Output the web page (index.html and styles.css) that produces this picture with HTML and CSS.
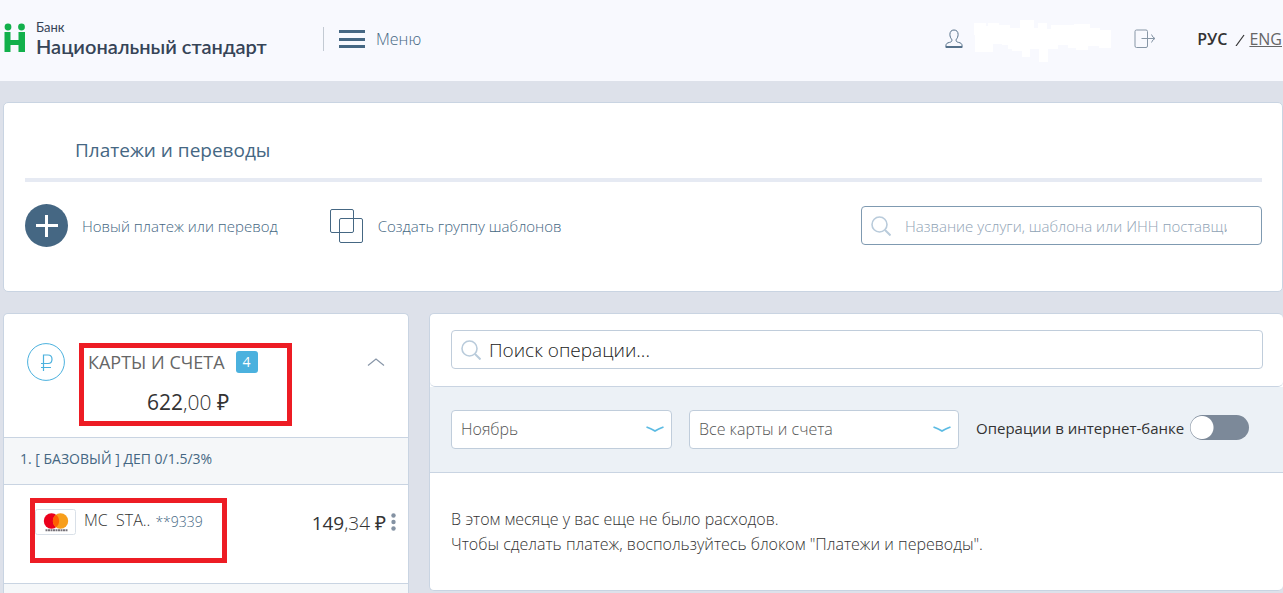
FILE: index.html
```
<!DOCTYPE html>
<html lang="ru">
<head>
    <meta charset="UTF-8">
    <meta name="viewport" content="width=device-width, initial-scale=1.0">
    <title>Банк Национальный стандарт</title>
    <link rel="stylesheet" href="styles.css">
</head>
<body>
    <header class="header">
        <a class="logo" href="#">
            <svg width="22" height="30" viewBox="0 0 22 30" fill="#12b04b">
                <circle cx="4" cy="4" r="3.4"/>
                <circle cx="17.500" cy="4" r="3.400"/>
                <path d="M0.500 9H6.500V17H14.500V9H21V29H14.500V22H6.500V29H0.500Z"/>
            </svg>
            <span class="logo-text">
                <span class="logo-small">Банк</span>
                <span class="logo-name">Национальный стандарт</span>
            </span>
        </a>
        <button type="button" class="menu-button">
            <span class="burger"></span>
            Меню
        </button>
        <div class="user">
            <svg width="18" height="20" viewBox="0 0 18 20" fill="none" stroke="#56718a">
                <path d="M9 1C6.400 1 4.900 2.800 4.900 5.300C4.900 7.600 5.700 9.200 6.700 10.200C7.300 12.200 6.500 12.900 4.500 13.400C2 14 1 14.500 0.900 17V18.500H17.100V17C17 14.500 16 14 13.500 13.400C11.500 12.900 10.700 12.200 11.300 10.200C12.300 9.200 13.100 7.600 13.100 5.300C13.100 2.800 11.600 1 9 1Z"/>
                <path d="M1 17.500H17"/>
            </svg>
            <svg class="user-name" width="138" height="44" viewBox="0 0 138 44" fill="#fff">
                <path d="M0 4H12V7H14V4H25V6H36V9H46V1H60V9H64V4H73V10H77V6H100V5H116V9H126V11H137V29H125V27H114V31H102V29H94V26H84V30H74V43H65V30H56V38H48V32H38V30H34V26H28V25H19V33H1V16H0Z"/>
            </svg>
        </div>
        <a class="logout" href="#" aria-label="Выход">
            <svg width="22" height="20" viewBox="0 0 22 20" fill="none" stroke="#8796a6">
                <rect x="1" y="1" width="12.500" height="17.500" rx="1.500"/>
                <path d="M7.500 9.500H21M17.500 5.500Q18.500 8.500 21 9.500Q18.500 10.500 17.500 13.500"/>
            </svg>
        </a>
        <div class="langs">
            <span class="lang-active">РУС</span>
            <svg width="10" height="14" viewBox="0 0 10 14" stroke="#333" stroke-width="1.200">
                <path d="M1 14L9 3"/>
            </svg>
            <a href="#">ENG</a>
        </div>
    </header>

    <main class="content">
        <section class="panel payments">
            <h2>Платежи и переводы</h2>
            <div class="payments-row">
                <a class="action action-new" href="#">
                    <svg width="43" height="43" viewBox="0 0 43 43">
                        <circle cx="21.500" cy="21.500" r="21.500" fill="#456783"/>
                        <path d="M11 21.500H33M21.500 11V33" stroke="#fff" stroke-width="3"/>
                    </svg>
                    Новый платеж или перевод
                </a>
                <a class="action" href="#">
                    <svg width="34" height="35" viewBox="0 0 34 35" fill="none" stroke="#456783">
                        <rect x="0.500" y="1.500" width="23" height="23" rx="1.500"/>
                        <rect x="9.500" y="10.500" width="23" height="24" rx="1.500"/>
                    </svg>
                    Создать группу шаблонов
                </a>
                <label class="search search-service">
                    <svg width="20" height="20" viewBox="0 0 20 20" fill="none" stroke="#b9cbdb" stroke-width="1.600">
                        <circle cx="8.500" cy="8.500" r="7.500"/>
                        <path d="M14 14L19.500 19.500" stroke-width="2"/>
                    </svg>
                    <input type="text" placeholder="Название услуги, шаблона или ИНН поставщика" aria-label="Поиск услуги">
                </label>
            </div>
        </section>

        <div class="columns">
            <aside class="panel accounts">
                <div class="accounts-head">
                    <svg width="38" height="38" viewBox="0 0 38 38" fill="none" stroke="#4bb1de">
                        <circle cx="19" cy="19" r="18.400"/>
                        <path d="M16.500 28V12H21Q25 12 25 16.200Q25 20.500 21 20.500H14M14 24.500H24" stroke-width="1.200"/>
                    </svg>
                    <div class="accounts-summary">
                        <div class="accounts-title">КАРТЫ И СЧЕТА <span class="count">4</span></div>
                        <div class="accounts-total"><b>622</b>,00 <b>₽</b></div>
                    </div>
                    <button type="button" class="collapse" aria-label="Свернуть">
                        <svg width="18" height="8" viewBox="0 0 18 8" fill="none" stroke="#8896a8" stroke-width="1.200">
                            <path d="M1 7.500L9 1L17 7.500"/>
                        </svg>
                    </button>
                </div>
                <div class="group">1. [ БАЗОВЫЙ ] ДЕП 0/1.5/3%</div>
                <div class="card-row">
                    <div class="card-info">
                        <svg width="41" height="26" viewBox="0 0 41 26">
                            <rect x="0.500" y="0.500" width="40" height="25" rx="2" fill="#fff" stroke="#d9e0e8"/>
                            <circle cx="16.500" cy="12" r="7.700" fill="#eb001b"/>
                            <circle cx="25.500" cy="12" r="7.700" fill="#f79e1b"/>
                            <path d="M21 5.800A7.700 7.700 0 0 1 21 18.200A7.700 7.700 0 0 1 21 5.800Z" fill="#ff5f00"/>
                            <path d="M10.500 21.300H32.500" stroke="#77737a" stroke-width="2" stroke-dasharray="2 0.500"/>
                        </svg>
                        <span class="card-name">MC&nbsp; STA..</span>
                        <span class="card-number">**9339</span>
                    </div>
                    <div class="card-sum"><b>149</b>,34 <b>₽</b></div>
                    <button type="button" class="dots" aria-label="Действия">
                        <svg width="5" height="18" viewBox="0 0 5 18" fill="#8492a3">
                            <circle cx="2.500" cy="2.500" r="2.200"/>
                            <circle cx="2.500" cy="9" r="2.200"/>
                            <circle cx="2.500" cy="15.500" r="2.200"/>
                        </svg>
                    </button>
                </div>
                <div class="group group-rest"></div>
            </aside>

            <section class="panel operations">
                <div class="operations-search">
                    <label class="search">
                        <svg width="20" height="20" viewBox="0 0 20 20" fill="none" stroke="#b9cbdb" stroke-width="1.600">
                            <circle cx="8.500" cy="8.500" r="7.500"/>
                            <path d="M14 14L19.500 19.500" stroke-width="2"/>
                        </svg>
                        <input type="text" placeholder="Поиск операции..." aria-label="Поиск операции">
                    </label>
                </div>
                <div class="filters">
                    <div class="select select-month">
                        <select aria-label="Месяц">
                            <option>Ноябрь</option>
                        </select>
                        <svg width="18" height="7" viewBox="0 0 18 7" fill="none" stroke="#5cbbe3" stroke-width="1.800">
                            <path d="M0.500 1Q6 3 9 5Q12 3 17.500 1"/>
                        </svg>
                    </div>
                    <div class="select select-account">
                        <select aria-label="Карты и счета">
                            <option>Все карты и счета</option>
                        </select>
                        <svg width="18" height="7" viewBox="0 0 18 7" fill="none" stroke="#5cbbe3" stroke-width="1.800">
                            <path d="M0.500 1Q6 3 9 5Q12 3 17.500 1"/>
                        </svg>
                    </div>
                    <label class="toggle">
                        Операции в интернет-банке
                        <input type="checkbox">
                    </label>
                </div>
                <p class="empty">
                    В этом месяце у вас еще не было расходов.<br>
                    Чтобы сделать платеж, воспользуйтесь блоком "Платежи и переводы".
                </p>
            </section>
        </div>
    </main>
</body>
</html>
```
FILE: styles.css
```
*,
*::before,
*::after {
    box-sizing: border-box;
}

body {
    display: flex;
    flex-direction: column;
    height: 100vh;
    margin: 0;
    overflow: hidden;
    background: #dde1ea;
    color: #333;
    font-family: "Open Sans", "Noto Sans", sans-serif;
    font-size: 16px;
    font-weight: 300;
}

a {
    color: #456783;
    text-decoration: none;
}

b {
    font-weight: 400;
}

svg {
    display: block;
    flex-shrink: 0;
}

button {
    padding: 0;
    border: none;
    background: none;
    font: inherit;
    cursor: pointer;
}

input,
select {
    font: inherit;
    color: inherit;
}

/* header */

.header {
    display: flex;
    flex-shrink: 0;
    align-items: center;
    height: 81px;
    padding: 0 1px 3px 4px;
    background: #f8f9fe;
}

.logo {
    display: flex;
    align-items: center;
    gap: 10px;
    width: 319px;
    padding-bottom: 2px;
    color: #364457;
    font-family: Lato, "Noto Sans", sans-serif;
    white-space: nowrap;
}

.logo-small,
.logo-name {
    display: block;
}

.logo-small {
    font-size: 13px;
    line-height: 16px;
    font-weight: 400;
}

.logo-name {
    font-size: 20px;
    line-height: 22px;
    font-weight: 600;
}

.menu-button {
    display: flex;
    align-items: center;
    gap: 11px;
    height: 24px;
    padding-left: 15px;
    border-left: 1px solid #c3cad3;
    color: #456783;
}

.burger {
    width: 26px;
    height: 18px;
    border: solid #456783;
    border-width: 3px 0;
    background: linear-gradient(#456783, #456783) center / 100% 3px no-repeat;
}

.user {
    display: flex;
    align-items: center;
    gap: 11px;
    margin-left: auto;
}

.user-name {
    margin-top: 4px;
}

.logout {
    margin: 0 41px 0 22px;
}

.langs {
    display: flex;
    align-items: center;
    gap: 8px;
    font-weight: 400;
}

.lang-active {
    font-weight: 600;
}

.langs a {
    margin-left: -4px;
    color: #666;
    text-decoration: underline;
}

/* panels */

.content {
    display: flex;
    flex: 1;
    flex-direction: column;
    gap: 21px;
    min-height: 0;
    padding: 21px 0 0 3px;
}

.panel {
    border: 1px solid #c9d4e2;
    border-radius: 5px;
    background: #fff;
}

.payments {
    flex-shrink: 0;
    padding: 30px 20px 44px 21px;
}

.payments h2 {
    margin: 0 0 22px;
    padding: 0 50px 11px;
    border-bottom: 4px solid #e6eaf3;
    color: #456783;
    font-size: 19px;
    line-height: 34px;
    font-weight: 400;
}

.payments-row {
    display: flex;
    align-items: center;
}

.action {
    display: flex;
    align-items: center;
    gap: 14px;
    font-size: 15px;
}

.action-new {
    margin-right: 52px;
}

.search {
    display: flex;
    align-items: center;
    height: 39px;
    padding-left: 9px;
    border: 1px solid #c0cddb;
    border-radius: 4px;
    background: #fff;
}

.search input {
    flex: 1;
    min-width: 0;
    padding: 0 0 0 8px;
    border: none;
    outline: none;
    background: none;
    font-size: 19px;
}

.search input::placeholder {
    color: #222;
    opacity: 1;
}

.search-service {
    width: 401px;
    margin-left: auto;
    padding-right: 34px;
    border-color: #7f9ab1;
}

.search-service input {
    margin-left: 14px;
    padding: 0;
    font-size: 15px;
}

.search-service input::placeholder {
    color: #8fa3b5;
}

.columns {
    display: flex;
    flex: 1;
    align-items: flex-start;
    gap: 20px;
    min-height: 0;
}

/* accounts */

.accounts {
    display: flex;
    flex-direction: column;
    flex-shrink: 0;
    align-self: stretch;
    width: 406px;
    border-bottom: none;
    border-radius: 5px 5px 0 0;
}

.accounts-head {
    display: flex;
    flex-shrink: 0;
    align-items: flex-start;
    height: 123px;
    padding: 29px 23px 0 23px;
}

/* highlighted blocks */
.accounts-summary,
.card-info {
    position: relative;
}

.accounts-summary::after,
.card-info::after {
    content: "";
    position: absolute;
    border: 5px solid #ed1c24;
    pointer-events: none;
}

.accounts-summary {
    margin-left: 23px;
}

.accounts-summary::after {
    top: 0;
    left: -9px;
    width: 213px;
    height: 83px;
}

.accounts-title {
    display: flex;
    align-items: center;
    gap: 11px;
    height: 38px;
    color: #666;
    font-size: 18px;
    font-weight: 400;
}

.count {
    width: 22px;
    border-radius: 3px;
    background: #4bb1de;
    color: #fff;
    font-size: 14px;
    line-height: 22px;
    text-align: center;
}

.accounts-total {
    padding-left: 59px;
    font-size: 21px;
    line-height: 42px;
}

.collapse {
    margin: 15px 0 0 auto;
}

.group {
    flex-shrink: 0;
    height: 48px;
    padding-left: 16px;
    border: solid #c9d4e2;
    border-width: 1px 0;
    background: #f5f7f9;
    color: #456783;
    font-size: 14px;
    line-height: 42px;
    font-weight: 400;
}

.group-rest {
    flex: 1;
    height: auto;
    border-bottom: none;
}

.card-row {
    display: flex;
    flex-shrink: 0;
    align-items: flex-start;
    height: 98px;
    padding: 23px 12px 0 31px;
}

.card-info {
    display: flex;
    align-items: center;
    line-height: 24px;
}

.card-info::after {
    top: -10px;
    left: -5px;
    width: 197px;
    height: 65px;
}

.card-name {
    margin: 0 5px 0 8px;
    padding-bottom: 4px;
}

.card-number {
    color: #456783;
    font-size: 14px;
}

.card-sum {
    margin-left: auto;
    font-size: 19px;
    line-height: 30px;
}

.dots {
    margin: 5px 0 0 5px;
}

/* operations */

.operations {
    flex: 1;
    border-right: none;
}

.operations-search {
    padding: 16px 20px 17px 21px;
    border-bottom: 1px solid #c9d4e2;
    border-radius: 5px;
}

.filters {
    display: flex;
    align-items: center;
    gap: 17px;
    padding: 23px 20px 23px 21px;
    border-bottom: 1px solid #c9d4e2;
    background: #ecf1f6;
}

.select {
    position: relative;
}

.select select {
    width: 100%;
    height: 39px;
    padding: 0 36px 2px 9px;
    border: 1px solid #c0cddb;
    border-radius: 4px;
    background: #fff;
    color: #555;
    appearance: none;
}

.select svg {
    position: absolute;
    top: 16px;
    right: 8px;
    pointer-events: none;
}

.select-month {
    width: 221px;
}

.select-account {
    width: 270px;
}

.toggle {
    display: flex;
    align-items: center;
    gap: 6px;
    padding-bottom: 4px;
    font-size: 15px;
    font-weight: 400;
}

.toggle input {
    width: 59px;
    height: 25px;
    margin: 0;
    border-radius: 13px;
    background: radial-gradient(circle at 12px 50%, #fff 11px, #7c8999 12px);
    appearance: none;
}

.empty {
    margin: 0;
    padding: 34px 21px 33px;
    line-height: 25px;
}
```
